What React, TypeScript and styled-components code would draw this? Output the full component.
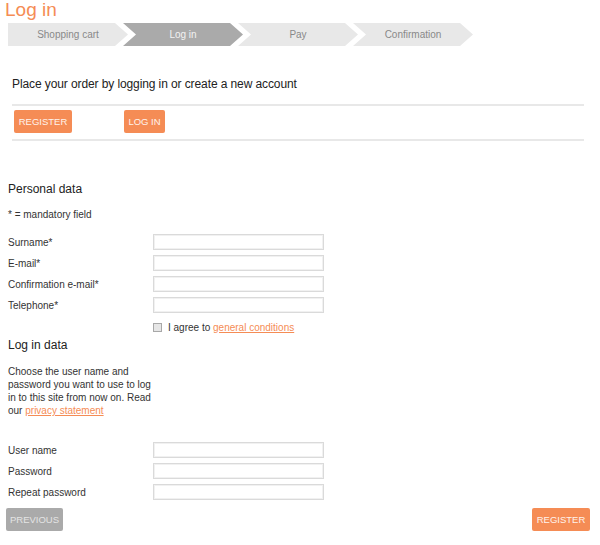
import React from "react";
import styled, { createGlobalStyle } from "styled-components";

const GlobalStyle = createGlobalStyle`
  html, body { margin: 0; padding: 0; background: #fff; }
  body { font-family: "Liberation Sans", Arial, sans-serif; color: #333; }
  * { box-sizing: border-box; }
`;

const ORANGE = "#f58c55";

const Page = styled.div`
  width: 600px;
  height: 545px;
  padding: 0 10px 0 8px;
  overflow: hidden;
`;

const Title = styled.h1`
  margin: 0 0 4px -3px;
  font-size: 19px;
  line-height: 19px;
  font-weight: normal;
  color: ${ORANGE};
`;

const Steps = styled.div`
  display: flex;
  height: 23px;
`;

const Step = styled.div<{ $active?: boolean; $first?: boolean }>`
  width: 120px;
  height: 23px;
  margin-left: ${(p) => (p.$first ? "0" : "-5px")};
  background: ${(p) => (p.$active ? "#aaaaaa" : "#e8e8e8")};
  color: ${(p) => (p.$active ? "#f2f2f2" : "#888888")};
  font-size: 10px;
  line-height: 23px;
  text-align: center;
  clip-path: ${(p) =>
    p.$first
      ? "polygon(0 0, calc(100% - 13px) 0, 100% 50%, calc(100% - 13px) 100%, 0 100%)"
      : "polygon(0 0, calc(100% - 13px) 0, 100% 50%, calc(100% - 13px) 100%, 0 100%, 13px 50%)"};
`;

const Intro = styled.div`
  margin: 31px 0 0 4px;
  width: 572px;
`;

const IntroText = styled.p`
  margin: 0 0 13px 0;
  font-size: 12px;
  line-height: 14px;
  letter-spacing: -0.1px;
  color: #222;
`;

const Divider = styled.div`
  height: 2px;
  background: #e8e8e8;
`;

const ButtonRow = styled.div`
  display: flex;
  gap: 52px;
  padding: 4px 0 6px 2px;
`;

const Button = styled.button<{ $muted?: boolean; $w: number }>`
  width: ${(p) => p.$w}px;
  height: 23px;
  padding: 0;
  border: none;
  border-radius: 2px;
  background: ${(p) => (p.$muted ? "#aaaaaa" : ORANGE)};
  color: ${(p) => (p.$muted ? "#e4e4e4" : "#fff3ec")};
  font-family: "Liberation Sans", Arial, sans-serif;
  font-size: 9.5px;
  line-height: 23px;
  text-align: center;
  cursor: pointer;
`;

const Heading = styled.h2<{ $top: number }>`
  margin: ${(p) => p.$top}px 0 0 0;
  font-size: 12px;
  line-height: 14px;
  font-weight: normal;
  color: #222;
`;

const Note = styled.p`
  margin: 13px 0 0 0;
  font-size: 10px;
  line-height: 12px;
  color: #333;
`;

const Rows = styled.div<{ $top: number }>`
  display: flex;
  flex-direction: column;
  gap: 5px;
  margin-top: ${(p) => p.$top}px;
`;

const Row = styled.label`
  display: grid;
  grid-template-columns: 145px 171px;
  align-items: center;
  height: 16px;
  font-size: 10px;
  color: #333;
`;

const Input = styled.input`
  width: 171px;
  height: 16px;
  border: 1px solid #dadada;
  box-shadow: inset 0 0 0 1px #f1f1f1;
  background: #fff;
  padding: 0 3px;
  outline: none;
`;

const AgreeRow = styled.div`
  display: flex;
  align-items: center;
  gap: 6px;
  margin: 8px 0 0 145px;
  height: 12px;
  font-size: 10px;
  color: #333;
`;

const Check = styled.input`
  appearance: none;
  margin: 0;
  width: 9px;
  height: 9px;
  border: 1px solid #a8a8a8;
  background: #e6e6e6;
`;

const Link = styled.a`
  color: ${ORANGE};
  text-decoration: underline;
`;

const Paragraph = styled.p`
  margin: 13px 0 0 0;
  width: 145px;
  font-size: 10px;
  line-height: 13px;
  color: #333;
`;

const Footer = styled.div`
  display: flex;
  justify-content: space-between;
  margin: 8px 0 0 -2px;
`;

const personal = ["Surname*", "E-mail*", "Confirmation e-mail*", "Telephone*"];
const login = ["User name", "Password", "Repeat password"];

export default function App() {
  return (
    <>
      <GlobalStyle />
      <Page>
        <Title>Log in</Title>
        <Steps>
          <Step $first>Shopping cart</Step>
          <Step $active>Log in</Step>
          <Step>Pay</Step>
          <Step>Confirmation</Step>
        </Steps>
        <Intro>
          <IntroText>Place your order by logging in or create a new account</IntroText>
          <Divider />
          <ButtonRow>
            <Button $w={58}>REGISTER</Button>
            <Button $w={41}>LOG IN</Button>
          </ButtonRow>
          <Divider />
        </Intro>
        <Heading $top={41}>Personal data</Heading>
        <Note>* = mandatory field</Note>
        <Rows $top={13}>
          {personal.map((l) => (
            <Row key={l}>
              <span>{l}</span>
              <Input type="text" />
            </Row>
          ))}
        </Rows>
        <AgreeRow>
          <Check type="checkbox" />
          <span>
            I agree to <Link href="#">general conditions</Link>
          </span>
        </AgreeRow>
        <Heading $top={5}>Log in data</Heading>
        <Paragraph>
          Choose the user name and password you want to use to log in to this site from now on. Read our{" "}
          <Link href="#">privacy statement</Link>
        </Paragraph>
        <Rows $top={25}>
          {login.map((l) => (
            <Row key={l}>
              <span>{l}</span>
              <Input type={l.includes("assword") ? "password" : "text"} />
            </Row>
          ))}
        </Rows>
        <Footer>
          <Button $muted $w={57}>PREVIOUS</Button>
          <Button $w={58}>REGISTER</Button>
        </Footer>
      </Page>
    </>
  );
}
